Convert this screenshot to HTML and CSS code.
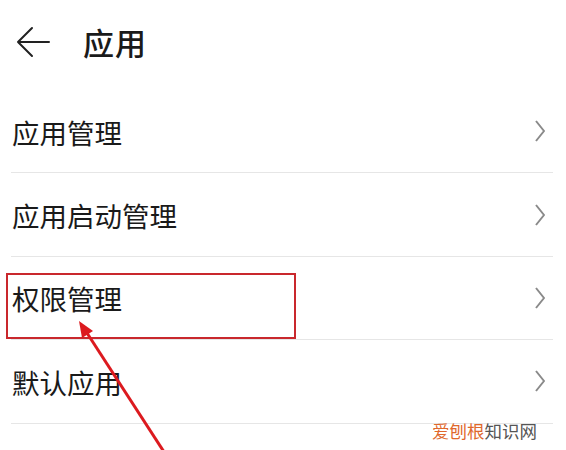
FILE: index.html
```html
<!DOCTYPE html>
<html lang="zh-CN">
<head>
    <meta charset="UTF-8">
    <meta name="viewport" content="width=device-width, initial-scale=1.0">
    <title>应用</title>
    <link rel="stylesheet" href="styles.css">
</head>
<body>
    <header class="topbar">
        <svg class="back" width="36" height="32" viewBox="0 0 36 32">
            <path d="M34 16H3M17 2L3 16l14 14" fill="none" stroke="#222" stroke-width="2" stroke-linecap="round" stroke-linejoin="round"/>
        </svg>
        <h1 class="title">应用</h1>
    </header>

    <ul class="menu">
        <li class="item"><span>应用管理</span><svg class="chevron" width="10" height="22" viewBox="0 0 10 22"><path d="M1 1l8 10-8 10"/></svg></li>
        <li class="item"><span>应用启动管理</span><svg class="chevron" width="10" height="22" viewBox="0 0 10 22"><path d="M1 1l8 10-8 10"/></svg></li>
        <li class="item marked"><span>权限管理</span><svg class="chevron" width="10" height="22" viewBox="0 0 10 22"><path d="M1 1l8 10-8 10"/></svg></li>
        <li class="item"><span>默认应用</span><svg class="chevron" width="10" height="22" viewBox="0 0 10 22"><path d="M1 1l8 10-8 10"/></svg></li>
        <li class="item"><span>应用分身</span><svg class="chevron" width="10" height="22" viewBox="0 0 10 22"><path d="M1 1l8 10-8 10"/></svg></li>
    </ul>

    <!-- annotation drawn over the screenshot -->
    <svg class="pointer" width="566" height="450" viewBox="0 0 566 450">
        <line x1="166" y1="455" x2="87" y2="333" stroke="#dc1a1f" stroke-width="3"/>
        <polygon points="79,321 93,331 82,338" fill="#dc1a1f"/>
    </svg>

    <div class="watermark"><span class="wm-hot">爱刨根</span>知识网</div>
</body>
</html>
```

FILE: styles.css
```css
html, body {
    height: 100%;
}
body {
    margin: 0;
    background: #fff;
    color: #1a1a1a;
    font-family: "Noto Sans CJK SC", "Noto Sans", sans-serif;
    overflow: hidden;
    position: relative;
}
.topbar {
    height: 90px;
    display: flex;
    align-items: center;
    padding: 0 0 0 15px;
    box-sizing: border-box;
}
.back {
    margin-top: -7px;
}
.title {
    margin: -8px 0 0 32px;
    font-size: 31px;
    font-weight: 500;
    letter-spacing: 1px;
}
.menu {
    list-style: none;
    margin: 0;
    padding: 0 13px 0 11px;
}
.item {
    height: 83.4px;
    display: flex;
    align-items: center;
    justify-content: space-between;
    border-bottom: 1px solid #e6e6e6;
    box-sizing: border-box;
    padding: 0 6px 0 1px;
    font-size: 27.5px;
    position: relative;
}
.item span {
    margin-top: 1px;
}
.chevron {
    fill: none;
    stroke: #8a8a8a;
    stroke-width: 2;
    margin-right: 2px;
}
.marked::before {
    content: '';
    position: absolute;
    left: -5px;
    top: 16px;
    width: 286px;
    height: 62px;
    border: 2px solid #c9282d;
}
.pointer {
    position: absolute;
    left: 0;
    top: 0;
}
.watermark {
    position: absolute;
    left: 432px;
    top: 418px;
    font-size: 17.5px;
    color: #555;
}
.wm-hot {
    color: #e0682c;
}
```
